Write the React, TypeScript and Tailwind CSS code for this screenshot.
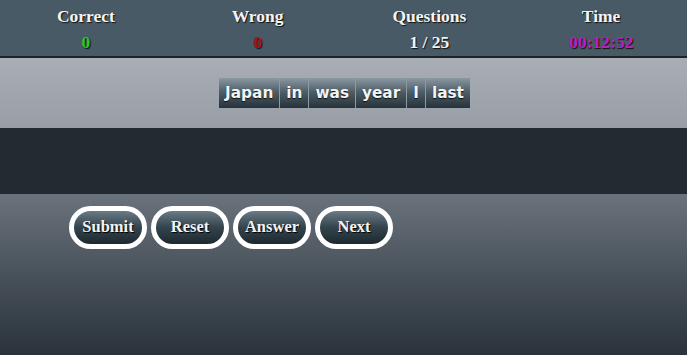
import React from "react";

const serif = { fontFamily: '"Liberation Serif", "Times New Roman", serif' };
const sans = { fontFamily: '"DejaVu Sans", Verdana, sans-serif' };

const stats = [
  { label: "Correct", value: "0", color: "text-[#27c92a]" },
  { label: "Wrong", value: "0", color: "text-[#b3101e]" },
  { label: "Questions", value: "1 / 25", color: "text-[#f2f2f2]" },
  { label: "Time", value: "00:12:52", color: "text-[#c21cc9]" },
];

const words = ["Japan", "in", "was", "year", "I", "last"];
const buttons = ["Submit", "Reset", "Answer", "Next"];

export default function App() {
  return (
    <div className="w-[687px] h-[355px] overflow-hidden flex flex-col" style={serif}>
      <div className="h-[58px] bg-[#475a66] grid grid-cols-4 border-b-2 border-[#1c2329]">
        {stats.map((s) => (
          <div key={s.label} className="flex flex-col items-center pt-[5px]">
            <div className="text-[17.5px] leading-[22px] font-bold text-[#f4f4f4] [text-shadow:1px_1px_1px_#111]">
              {s.label}
            </div>
            <div className={`text-[17.5px] leading-[22px] mt-[4px] font-bold ${s.color} [text-shadow:1px_1px_1px_#111]`}>
              {s.value}
            </div>
          </div>
        ))}
      </div>
      <div className="h-[70px] bg-gradient-to-b from-[#a9aeb5] to-[#989ea5] flex items-center justify-center">
        <div className="flex pl-[2px]">
          {words.map((w) => (
            <div
              key={w}
              className="h-[30px] px-[6px] flex items-center border-r border-[#8d9aa3] last:border-r-0 bg-gradient-to-b from-[#8a98a1] via-[#4a5a64] to-[#27333b] text-[#f2f4f5] text-[15.3px] font-bold [text-shadow:0_1px_1px_#111]"
              style={sans}
            >
              {w}
            </div>
          ))}
        </div>
      </div>
      <div className="h-[66px] bg-[#232a32]" />
      <div className="flex-1 bg-gradient-to-b from-[#6a737c] to-[#2a333b] pt-[12px] pl-[69px]">
        <div className="flex gap-[4px]">
          {buttons.map((b) => (
            <div
              key={b}
              className="w-[78px] h-[43px] rounded-full border-[5px] border-white flex items-center justify-center bg-gradient-to-b from-[#6b7c86] via-[#34444d] to-[#1e292f] text-[#f1f3f4] text-[16.5px] font-bold [text-shadow:1px_1px_1px_#000]"
            >
              {b}
            </div>
          ))}
        </div>
      </div>
    </div>
  );
}
